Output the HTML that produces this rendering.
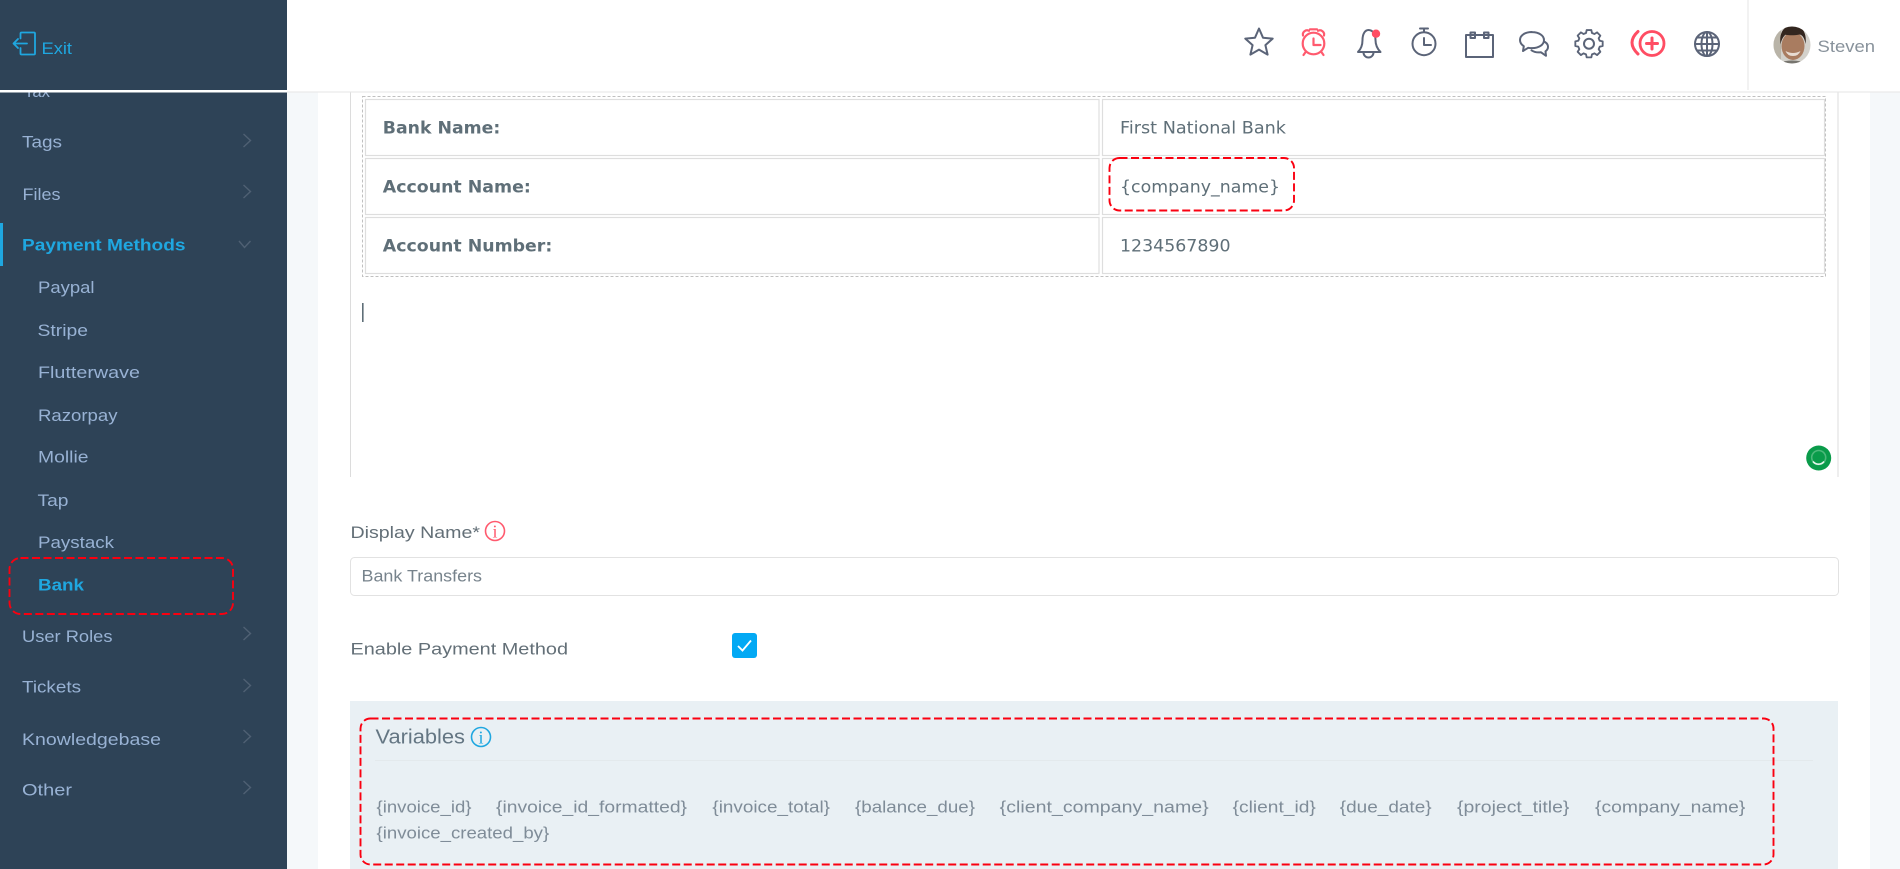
<!DOCTYPE html>
<html lang="en">
<head>
<meta charset="utf-8">
<title>Bank Settings</title>
<style>
html,body{margin:0;padding:0;width:1900px;height:869px;overflow:hidden;background:#f5f8fa}
svg{display:block}
.s{font-family:"Liberation Sans",sans-serif;font-size:17px;fill:#98b2d4}
.a{font-family:"Liberation Sans",sans-serif;font-size:17px;font-weight:bold;fill:#1fa7e0}
.t{font-family:"DejaVu Sans",sans-serif;font-size:16.5px;fill:#5f6f78}
.b{font-weight:bold}
.l{font-family:"Liberation Sans",sans-serif;font-size:17px;fill:#636f77}
.v{font-family:"Liberation Sans",sans-serif;font-size:16.5px;fill:#7f8c98}
.i{fill:none;stroke:#5b6478;stroke-width:2;stroke-linecap:round;stroke-linejoin:round}
.r{fill:none;stroke:#ff5a6e;stroke-width:2.2;stroke-linecap:round;stroke-linejoin:round}
.c{fill:none;stroke:#4f6073;stroke-width:1.4}
.d{fill:none;stroke:#fa0010;stroke-width:1.9;stroke-dasharray:8 3.5}
</style>
</head>
<body>
<svg width="1900" height="869" viewBox="0 0 1900 869" xmlns="http://www.w3.org/2000/svg">
<!-- backgrounds -->
<rect width="1900" height="869" fill="#f5f8fa"/>
<rect x="318" y="92" width="1552" height="777" fill="#fff"/>
<rect x="0" y="0" width="287" height="869" fill="#2e4357"/>

<!-- sidebar -->
<text class="s" x="24" y="97" textLength="26" lengthAdjust="spacingAndGlyphs">Tax</text>
<text class="s" x="22" y="147.500" textLength="40" lengthAdjust="spacingAndGlyphs">Tags</text>
<text class="s" x="22.500" y="200" textLength="38" lengthAdjust="spacingAndGlyphs">Files</text>
<rect x="0" y="223" width="3" height="43" fill="#1fa7e0"/>
<text class="a" x="22" y="250.500" textLength="163.500" lengthAdjust="spacingAndGlyphs">Payment Methods</text>
<text class="s" x="38" y="293" textLength="56.500" lengthAdjust="spacingAndGlyphs">Paypal</text>
<text class="s" x="37.500" y="336" textLength="50.500" lengthAdjust="spacingAndGlyphs">Stripe</text>
<text class="s" x="38" y="378" textLength="102" lengthAdjust="spacingAndGlyphs">Flutterwave</text>
<text class="s" x="38" y="421" textLength="79.500" lengthAdjust="spacingAndGlyphs">Razorpay</text>
<text class="s" x="38" y="462.700" textLength="50.500" lengthAdjust="spacingAndGlyphs">Mollie</text>
<text class="s" x="37.500" y="506" textLength="31" lengthAdjust="spacingAndGlyphs">Tap</text>
<text class="s" x="38" y="548" textLength="76" lengthAdjust="spacingAndGlyphs">Paystack</text>
<text class="a" x="38" y="590.700" textLength="46" lengthAdjust="spacingAndGlyphs">Bank</text>
<text class="s" x="22" y="642" textLength="90.500" lengthAdjust="spacingAndGlyphs">User Roles</text>
<text class="s" x="22" y="692.700" textLength="59" lengthAdjust="spacingAndGlyphs">Tickets</text>
<text class="s" x="22" y="745" textLength="139" lengthAdjust="spacingAndGlyphs">Knowledgebase</text>
<text class="s" x="22" y="795.700" textLength="50" lengthAdjust="spacingAndGlyphs">Other</text>

<path class="c" d="M243.500 134l7 6.500-7 6.500M243.500 185l7 6.500-7 6.500M243.500 627l7 6.500-7 6.500M243.500 679l7 6.500-7 6.500M243.500 730l7 6.500-7 6.500M243.500 781l7 6.500-7 6.500M239 241l5.500 6.500 6-6.500"/>
<rect class="d" x="9.500" y="558" width="223.500" height="56" rx="11"/>

<!-- header -->
<rect x="0" y="0" width="287" height="90" fill="#2e4357"/>
<rect x="0" y="90" width="287" height="2.500" fill="#fff"/>
<rect x="287" y="0" width="1613" height="91.500" fill="#fff"/>
<rect x="287" y="91.500" width="1613" height="1" fill="#e6e6e6"/>
<rect x="1747.500" y="0" width="1" height="90" fill="#e4e4e4"/>

<path d="M20.500 38.500V33.500q0-1 1-1H34q1 0 1 1v20q0 1-1 1H21.500q-1 0-1-1V48M14 43.500H27M18 39l-4.500 4.500L18 48" fill="none" stroke="#1fa7e0" stroke-width="1.800" stroke-linecap="round" stroke-linejoin="round"/>
<text x="41.500" y="54" font-family="Liberation Sans, sans-serif" font-size="17" fill="#1fa7e0" textLength="30.500" lengthAdjust="spacingAndGlyphs">Exit</text>

<!-- star -->
<path class="i" d="M1259 28.500l4 9.200 9.700.9-7.300 6.500 2.200 9.500-8.600-5-8.600 5 2.200-9.500-7.300-6.500 9.700-.9z"/>
<!-- alarm -->
<g class="r">
<circle cx="1313.500" cy="43.500" r="10.800"/>
<path d="M1313.500 38.500v6.500h7M1303 35.500a4.200 4.200 0 0 1 6-4.700M1318 30.800a4.200 4.200 0 0 1 6 4.700M1310 29.300h7M1306 51.500l-2.500 3.500M1321 51.500l2.500 3.500"/>
</g>
<!-- bell -->
<path class="i" d="M1358 52c3-3 4.500-7 4.500-12 0-6 2.500-10 6-10 4 0 7 4 7 10 0 5 2 9 5 12zM1363.500 52.500a5 5 0 0 0 10 0"/>
<circle cx="1376" cy="33.700" r="4.200" fill="#ff4d63"/>
<!-- timer -->
<g class="i">
<circle cx="1424" cy="43.700" r="11.500"/>
<path d="M1424 38v7h7M1424 28.500v3.500M1420 28.500h8"/>
</g>
<!-- calendar -->
<path class="i" d="M1466 35h27v22h-27zM1470.500 32.500h4.500v5.500h-4.500zM1484 32.500h4.500v5.500h-4.500z" stroke-linejoin="miter"/>
<!-- chat -->
<path class="i" d="M1532 32c-7 0-12 3.500-12 8 0 2.500 1.500 4.700 3.800 6.200l-.8 4.800 5.200-3.200c1.200.2 2.500.3 3.800.3 7 0 12-3.500 12-8s-5-8-12-8zM1545 42c2 1.300 3 3 3 4.700 0 2-1 3.500-2.500 4.600l.5 4.500-5-3.500c-3.500.4-7-.3-9.500-2"/>
<!-- gear -->
<g class="i">
<circle cx="1589" cy="43.700" r="5"/>
<path transform="translate(1589 43.700) scale(.93) translate(-1589 -44.700)" d="M1586.500 30h5l.7 3.200 2.700 1.100 2.800-1.800 3.500 3.500-1.800 2.800 1.100 2.700 3.200.7v5l-3.200.7-1.100 2.700 1.800 2.800-3.500 3.500-2.800-1.800-2.700 1.100-.7 3.200h-5l-.7-3.200-2.700-1.100-2.800 1.800-3.500-3.500 1.800-2.800-1.100-2.700-3.200-.7v-5l3.200-.7 1.100-2.700-1.800-2.800 3.500-3.500 2.800 1.800 2.700-1.100z"/>
</g>
<!-- plus -->
<g fill="none" stroke="#ff4d63" stroke-linecap="round">
<circle cx="1652" cy="43.500" r="12" stroke-width="2.800"/>
<path d="M1646.500 43.500h11M1652 38v11" stroke-width="3"/>
<path d="M1638 31.500Q1626 42.500 1638 54" stroke-width="3"/>
</g>
<!-- globe -->
<g class="i" stroke-width="1.800">
<circle cx="1707" cy="44" r="12"/>
<ellipse cx="1707" cy="44" rx="5.500" ry="12"/>
<path d="M1707 32v24M1695 44h24M1697 37.500h20M1697 50.500h20"/>
</g>

<!-- avatar -->
<clipPath id="av"><circle cx="1792" cy="45" r="18.500"/></clipPath>
<g clip-path="url(#av)">
<rect x="1773" y="26" width="38" height="38" fill="#d3d1cb"/>
<rect x="1773" y="26" width="8" height="38" fill="#b9b4a8"/>
<ellipse cx="1793" cy="46" rx="11.500" ry="14" fill="#a97c60"/>
<path d="M1780.500 44c-1.500-11 3-18.500 12.500-18.500s14 7.500 12.500 18.500c-1-6-3-9-6-9.500-5 1-10 1-14 .2-2.500 2-4 5-5 9.800z" fill="#33261f"/>
<path d="M1785.500 51q7.500 4 15 0-2 5-7.500 5t-7.500-5z" fill="#e8dcd2"/>
<path d="M1776 64q16-7 33 0z" fill="#77756f"/>
</g>
<text x="1817.500" y="52" font-family="Liberation Sans, sans-serif" font-size="17" fill="#88929b" textLength="57.500" lengthAdjust="spacingAndGlyphs">Steven</text>

<!-- editor -->
<rect x="350" y="92.500" width="1" height="384.500" fill="#dcdcdc"/>
<rect x="1837.500" y="92.500" width="1" height="384.500" fill="#dcdcdc"/>
<rect x="362.500" y="96.500" width="1463" height="180" fill="none" stroke="#c0c0c0" stroke-dasharray="3 2"/>
<g fill="none" stroke="#dedede" stroke-width="1.200">
<rect x="365.500" y="99.500" width="733.500" height="56"/>
<rect x="1102.500" y="99.500" width="722" height="56"/>
<rect x="365.500" y="158.500" width="733.500" height="56"/>
<rect x="1102.500" y="158.500" width="722" height="56"/>
<rect x="365.500" y="217.500" width="733.500" height="56"/>
<rect x="1102.500" y="217.500" width="722" height="56"/>
</g>
<text class="t b" x="382.800" y="133.700" textLength="117.500" lengthAdjust="spacingAndGlyphs">Bank Name:</text>
<text class="t b" x="382.800" y="192.700" textLength="148" lengthAdjust="spacingAndGlyphs">Account Name:</text>
<text class="t b" x="382.800" y="251.500" textLength="169.500" lengthAdjust="spacingAndGlyphs">Account Number:</text>
<text class="t" x="1120" y="133.700" textLength="166" lengthAdjust="spacingAndGlyphs">First National Bank</text>
<text class="t" x="1120" y="192.700" textLength="160" lengthAdjust="spacingAndGlyphs">{company_name}</text>
<text class="t" x="1120" y="251.500" textLength="110.500" lengthAdjust="spacingAndGlyphs">1234567890</text>
<rect class="d" x="1109.500" y="158" width="184.500" height="52.500" rx="10"/>
<rect x="362" y="303" width="1.600" height="19" fill="#5f6f78"/>

<!-- grammarly -->
<circle cx="1818.700" cy="458" r="12.500" fill="#0a9b4a"/>
<circle cx="1818.700" cy="457.500" r="7" fill="none" stroke="#4db87a" stroke-width="1.600"/>
<path d="M1813 461.500a7 7 0 0 0 11 0" fill="none" stroke="#e6f5ec" stroke-width="1.600"/>

<!-- form -->
<text class="l" x="350.500" y="538" textLength="129.500" lengthAdjust="spacingAndGlyphs">Display Name*</text>
<circle cx="495" cy="531" r="9.500" fill="none" stroke="#ff5a6e" stroke-width="1.600"/>
<text x="495" y="537.500" text-anchor="middle" font-family="Liberation Serif, serif" font-size="18" fill="#ff5a6e">i</text>
<rect x="350.500" y="557.500" width="1488" height="38" rx="4" fill="#fff" stroke="#e2e2e2"/>
<text class="l" x="361.500" y="581.700" style="fill:#77838c" textLength="120.500" lengthAdjust="spacingAndGlyphs">Bank Transfers</text>
<text class="l" x="350.500" y="654.300" textLength="217.500" lengthAdjust="spacingAndGlyphs">Enable Payment Method</text>
<rect x="732" y="633" width="25" height="25" rx="3" fill="#03a9f4"/>
<path d="M738 646l4.500 4.500 8.500-10" fill="none" stroke="#fff" stroke-width="1.800"/>

<!-- variables -->
<rect x="350" y="701" width="1488" height="168" fill="#e9f0f4"/>
<text x="375.500" y="743.300" font-family="Liberation Sans, sans-serif" font-size="20" fill="#647683" textLength="89.500" lengthAdjust="spacingAndGlyphs">Variables</text>
<circle cx="481" cy="737" r="9.500" fill="none" stroke="#1fa7e0" stroke-width="1.600"/>
<text x="481" y="743.500" text-anchor="middle" font-family="Liberation Serif, serif" font-size="18" fill="#1fa7e0">i</text>
<rect x="375" y="760" width="1438" height="1" fill="#e3e9ec"/>
<text class="v" x="376.500" y="812.700" textLength="95" lengthAdjust="spacingAndGlyphs">{invoice_id}</text>
<text class="v" x="496" y="812.700" textLength="191" lengthAdjust="spacingAndGlyphs">{invoice_id_formatted}</text>
<text class="v" x="712.400" y="812.700" textLength="117.600" lengthAdjust="spacingAndGlyphs">{invoice_total}</text>
<text class="v" x="855" y="812.700" textLength="120" lengthAdjust="spacingAndGlyphs">{balance_due}</text>
<text class="v" x="999.700" y="812.700" textLength="209" lengthAdjust="spacingAndGlyphs">{client_company_name}</text>
<text class="v" x="1232.600" y="812.700" textLength="83.200" lengthAdjust="spacingAndGlyphs">{client_id}</text>
<text class="v" x="1339.800" y="812.700" textLength="91.800" lengthAdjust="spacingAndGlyphs">{due_date}</text>
<text class="v" x="1457" y="812.700" textLength="112.400" lengthAdjust="spacingAndGlyphs">{project_title}</text>
<text class="v" x="1595" y="812.700" textLength="150.400" lengthAdjust="spacingAndGlyphs">{company_name}</text>
<text class="v" x="376.500" y="838.700" textLength="172.700" lengthAdjust="spacingAndGlyphs">{invoice_created_by}</text>
<rect class="d" x="360.500" y="718.500" width="1413" height="146" rx="10"/>
</svg>
</body>
</html>
